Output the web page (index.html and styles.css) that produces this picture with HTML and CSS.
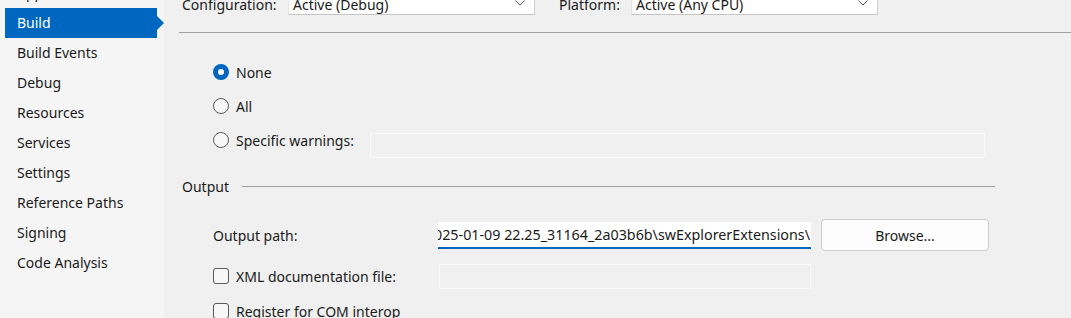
FILE: index.html
```html
<!DOCTYPE html>
<html lang="en">
<head>
    <meta charset="UTF-8">
    <title>Project Properties - Build</title>
    <link rel="stylesheet" href="styles.css">
</head>
<body>

<div class="window">
    <ul class="nav">
        <li>Application</li>
        <li class="active">Build</li>
        <li>Build Events</li>
        <li>Debug</li>
        <li>Resources</li>
        <li>Services</li>
        <li>Settings</li>
        <li>Reference Paths</li>
        <li>Signing</li>
        <li>Code Analysis</li>
    </ul>

    <div class="page">
        <div class="topbar">
            <span class="lbl-config">Configuration:</span>
            <div class="select">
                <span>Active (Debug)</span>
                <svg class="chev" width="10" height="6" viewBox="0 0 10 6"><path d="M0.5 0.5 L5 5 L9.5 0.5" fill="none" stroke="#555" stroke-width="1"/></svg>
            </div>
            <span class="lbl-platform">Platform:</span>
            <div class="select">
                <span>Active (Any CPU)</span>
                <svg class="chev" width="10" height="6" viewBox="0 0 10 6"><path d="M0.5 0.5 L5 5 L9.5 0.5" fill="none" stroke="#555" stroke-width="1"/></svg>
            </div>
        </div>
        <div class="rule"></div>

        <div class="group">
            <div class="row">
                <span class="radio checked"></span>
                <span>None</span>
            </div>
            <div class="row">
                <span class="radio"></span>
                <span>All</span>
            </div>
            <div class="row">
                <span class="radio"></span>
                <span class="lbl-warn">Specific warnings:</span>
                <div class="textbox disabled warn-box"></div>
            </div>
        </div>

        <div class="section">
            <span>Output</span>
            <div class="section-line"></div>
        </div>

        <div class="group">
            <div class="row path-row">
                <span class="lbl-path">Output path:</span>
                <div class="textbox focused">
                    <span>bin\Debug\2025-01-09 22.25_31164_2a03b6b\swExplorerExtensions\</span>
                </div>
                <button class="browse">Browse...</button>
            </div>
            <div class="row xml-row">
                <span class="check"></span>
                <span class="lbl-xml">XML documentation file:</span>
                <div class="textbox disabled xml-box"></div>
            </div>
            <div class="row com-row">
                <span class="check"></span>
                <span>Register for COM interop</span>
            </div>
        </div>
    </div>
</div>

</body>
</html>
```

FILE: styles.css
```css
body {
    margin: 0;
    font-family: "Noto Sans", "Open Sans", sans-serif;
    font-size: 14px;
    color: #1a1a1a;
    background-color: #f0f0f0;
    overflow: hidden;
}
.window {
    display: flex;
    height: 318px;
    overflow: hidden;
}
.nav {
    list-style: none;
    width: 164px;
    flex-shrink: 0;
    margin: 0;
    padding: 0;
    background-color: #f5f5f5;
}
.nav li {
    height: 30px;
    line-height: 30px;
    padding-left: 17px;
    white-space: nowrap;
}
.nav li:first-child {
    margin-top: -22px;
}
.nav li.active {
    position: relative;
    margin-left: 5px;
    width: 140px;
    padding-left: 12px;
    background-color: #0067c0;
    color: white;
}
.nav li.active::after {
    content: "";
    position: absolute;
    right: -7px;
    top: 8px;
    border-left: 7px solid #0067c0;
    border-top: 7px solid transparent;
    border-bottom: 7px solid transparent;
}
.page {
    flex: 1;
    padding-left: 18px;
}
.topbar {
    display: flex;
    align-items: center;
    height: 22px;
    margin-top: -7px;
}
.lbl-config {
    width: 106px;
}
.lbl-platform {
    width: 72px;
    margin-left: 24px;
}
.select {
    display: flex;
    align-items: center;
    justify-content: space-between;
    padding: 0 9px 0 4px;
    box-sizing: border-box;
    width: 247px;
    height: 22px;
    background-color: white;
    border: 1px solid #e3e3e3;
    border-right-color: #cfcfcf;
    border-bottom-color: #c4c4c4;
}
.chev {
    margin-top: -2px;
}
.rule {
    height: 1px;
    margin-top: 17px;
    margin-left: -3px;
    background-color: #a0a0a0;
}
.group {
    padding-left: 31px;
}
.row {
    display: flex;
    align-items: center;
    height: 34px;
    white-space: nowrap;
}
.rule + .group .row:first-child {
    margin-top: 22px;
}
.radio {
    width: 14px;
    height: 14px;
    border: 1px solid #5a5a5a;
    border-radius: 50%;
    background-color: #f7f7f7;
    margin-right: 7px;
    flex-shrink: 0;
    box-sizing: content-box;
}
.radio.checked {
    width: 6px;
    height: 6px;
    border: 5px solid #0067c0;
    background-color: white;
}
.check {
    width: 14px;
    height: 14px;
    border: 1px solid #5a5a5a;
    border-radius: 3px;
    background-color: #f7f7f7;
    margin-right: 7px;
    flex-shrink: 0;
}
.lbl-warn {
    width: 134px;
}
.textbox {
    box-sizing: border-box;
    height: 25px;
}
.textbox.disabled {
    background-color: #f0f0f0;
    border: 1px solid #fafafa;
}
.warn-box {
    width: 615px;
    align-self: flex-end;
    margin-bottom: -1px;
}
.section {
    display: flex;
    align-items: center;
    height: 24px;
    margin-top: 17px;
    margin-right: 76px;
}
.section-line {
    flex: 1;
    height: 1px;
    margin-left: 13px;
    background-color: #a0a0a0;
}
.path-row {
    height: 32px;
    margin-top: 21px;
}
.lbl-path {
    width: 225px;
}
.textbox.focused {
    width: 373px;
    height: 27px;
    font-size: 14.3px;
    background-color: white;
    border-bottom: 2px solid #0067c0;
    display: flex;
    justify-content: flex-end;
    align-items: center;
    overflow: hidden;
    padding-right: 1px;
}
.browse {
    width: 168px;
    height: 32px;
    margin-left: 10px;
    font-family: inherit;
    font-size: 14px;
    color: #1a1a1a;
    background-color: #fdfdfd;
    border: 1px solid #cccccc;
    border-radius: 4px;
}
.xml-row {
    height: 26px;
    margin-top: 12px;
}
.lbl-xml {
    width: 203px;
}
.xml-box {
    width: 372px;
}
.com-row {
    height: 26px;
    margin-top: 9px;
}
```
